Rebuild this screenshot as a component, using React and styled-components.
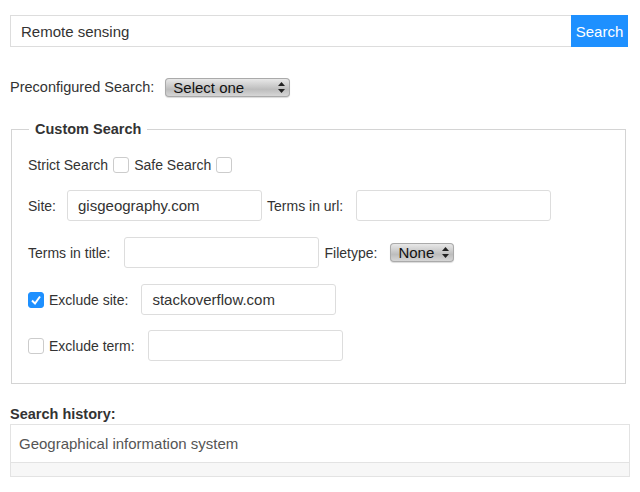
import React from "react";
import styled, { createGlobalStyle } from "styled-components";

const GlobalStyle = createGlobalStyle`
  body {
    margin: 0;
    background: #fff;
    font-family: "Liberation Sans", Arial, sans-serif;
    font-size: 14px;
    color: #333;
  }
`;

const Page = styled.div`
  padding: 15px 12px 0 10px;
`;

const SearchBar = styled.div`
  display: flex;
  height: 32px;
`;

const SearchInput = styled.div`
  flex: 1;
  border: 1px solid #ddd;
  border-right: none;
  display: flex;
  align-items: center;
  padding-left: 10px;
  font-size: 15px;
  color: #333;
`;

const SearchButton = styled.div`
  width: 57px;
  background: #1e90ff;
  color: #fff;
  font-size: 15px;
  display: flex;
  align-items: center;
  justify-content: center;
`;

const Row = styled.div`
  display: flex;
  align-items: center;
  margin-top: ${(p) => p.top || 0}px;
  height: ${(p) => p.h || 20}px;
`;

const Label = styled.span`
  font-size: ${(p) => p.size || 14}px;
  color: #333;
  margin-right: ${(p) => p.mr || 0}px;
  margin-left: ${(p) => p.ml || 0}px;
`;

const SelectBox = styled.div`
  width: ${(p) => p.w}px;
  height: 19px;
  box-sizing: border-box;
  border-radius: 4px;
  background: linear-gradient(#ececec, #cdcdcd 40%, #bdbdbd 60%, #dadada);
  box-shadow: inset 0 0 0 1px #aaa, 0 1px 1px rgba(0, 0, 0, 0.15);
  display: flex;
  align-items: center;
  justify-content: space-between;
  padding: 0 5px 0 8px;
  font-size: 15px;
  color: #111;
`;

const Fieldset = styled.fieldset`
  margin: 24px 2px 0 1px;
  border: 1px solid #d4d4d4;
  padding: 2px 16px 22px 16px;
`;

const Legend = styled.legend`
  font-weight: bold;
  font-size: 14.5px;
  padding: 0 6px;
  margin-left: 1px;
  color: #333;
`;

const Box = styled.span`
  width: 16px;
  height: 16px;
  box-sizing: border-box;
  border-radius: 3px;
  border: 1px solid ${(p) => (p.checked ? "#1e90ff" : "#ccc")};
  background: ${(p) => (p.checked ? "#1e90ff" : "#fff")};
  display: inline-flex;
  align-items: center;
  justify-content: center;
  margin: 0 ${(p) => p.mr || 0}px 0 ${(p) => p.ml || 0}px;
`;

const Field = styled.div`
  width: 195px;
  height: 31px;
  box-sizing: border-box;
  border: 1px solid #ddd;
  border-radius: 3px;
  display: flex;
  align-items: center;
  padding-left: 10px;
  font-size: 15px;
  color: #333;
`;

const HistoryLabel = styled.div`
  font-weight: bold;
  font-size: 14.5px;
  margin-top: 22px;
`;

const History = styled.div`
  margin: 2px -2px 0 0;
  border: 1px solid #e3e3e3;
`;

const HistoryItem = styled.div`
  height: 37px;
  display: flex;
  align-items: center;
  padding-left: 8px;
  font-size: 15px;
  color: #555;
  border-bottom: 1px solid #e3e3e3;
`;

const HistoryFoot = styled.div`
  height: 13px;
  background: #f7f7f7;
`;

const Arrows = () => (
  <svg width="7" height="11" viewBox="0 0 7 11">
    <path d="M3.5 0 L7 4 L0 4 Z M3.5 11 L7 7 L0 7 Z" fill="#222" />
  </svg>
);

const Check = () => (
  <svg width="12" height="12" viewBox="0 0 12 12">
    <path d="M2 6.5 L5 9.5 L10 2.5" fill="none" stroke="#fff" strokeWidth="2" />
  </svg>
);

export default function App() {
  return (
    <Page>
      <GlobalStyle />
      <SearchBar>
        <SearchInput>Remote sensing</SearchInput>
        <SearchButton>Search</SearchButton>
      </SearchBar>
      <Row top={30} h={20}>
        <Label size={14.5} mr={11}>Preconfigured Search:</Label>
        <SelectBox w={125}>
          Select one <Arrows />
        </SelectBox>
      </Row>
      <Fieldset>
        <Legend>Custom Search</Legend>
        <Row top={14} h={24}>
          <Label>Strict Search</Label>
          <Box ml={5} mr={5} />
          <Label>Safe Search</Label>
          <Box ml={5} />
        </Row>
        <Row top={13} h={31}>
          <Label mr={11}>Site:</Label>
          <Field>gisgeography.com</Field>
          <Label ml={5} mr={13}>Terms in url:</Label>
          <Field />
        </Row>
        <Row top={16} h={31}>
          <Label mr={14}>Terms in title:</Label>
          <Field />
          <Label ml={5} mr={13}>Filetype:</Label>
          <SelectBox w={64}>
            None <Arrows />
          </SelectBox>
        </Row>
        <Row top={16} h={31}>
          <Box checked mr={5}>
            <Check />
          </Box>
          <Label mr={13}>Exclude site:</Label>
          <Field>stackoverflow.com</Field>
        </Row>
        <Row top={15} h={31}>
          <Box mr={5} />
          <Label mr={13}>Exclude term:</Label>
          <Field />
        </Row>
      </Fieldset>
      <HistoryLabel>Search history:</HistoryLabel>
      <History>
        <HistoryItem>Geographical information system</HistoryItem>
        <HistoryFoot />
      </History>
    </Page>
  );
}
